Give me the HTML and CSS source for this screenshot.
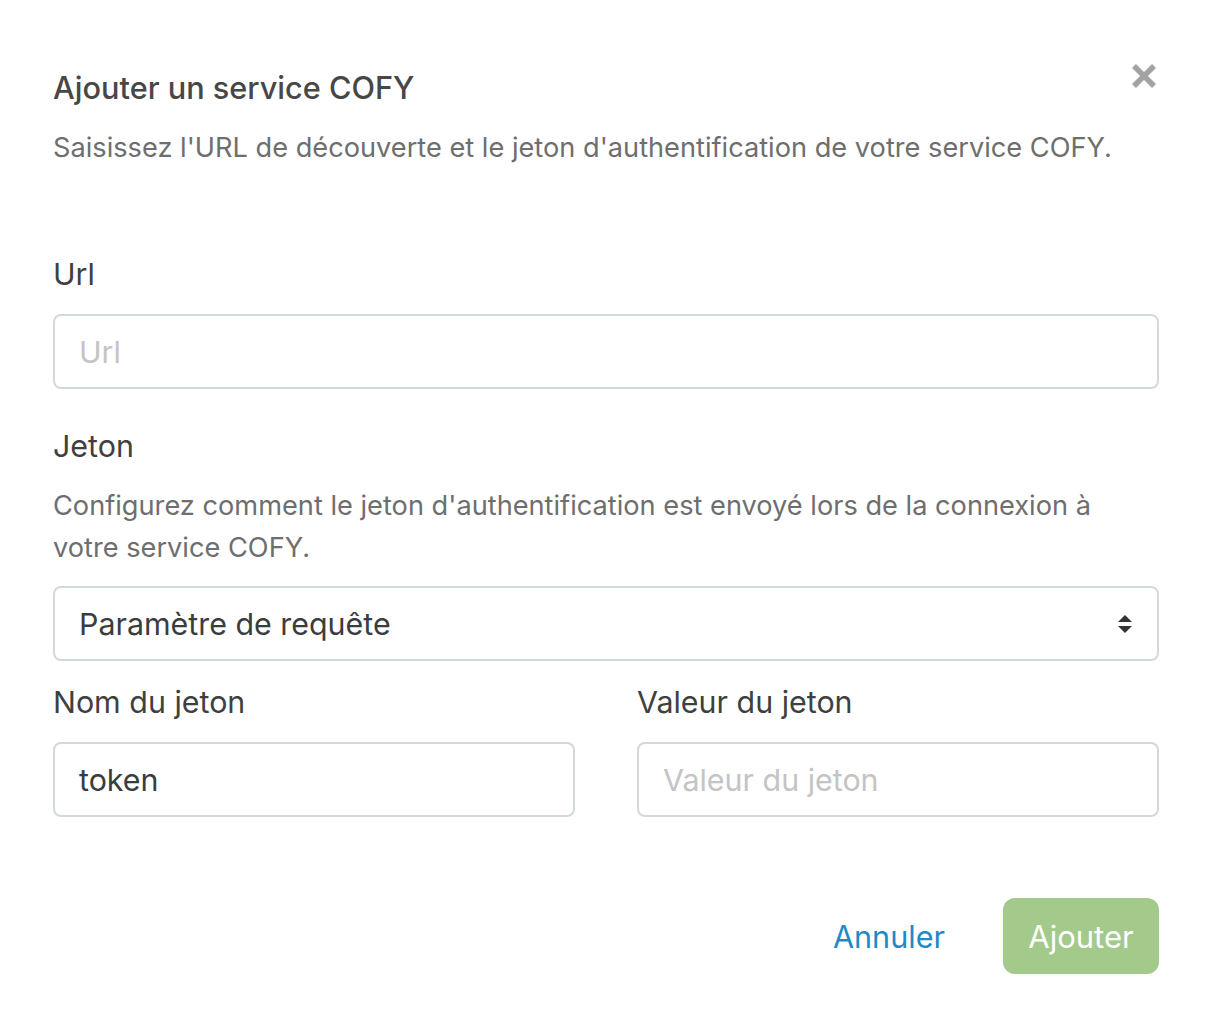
FILE: index.html
```html
<!DOCTYPE html>
<html lang="fr">
<head>
<meta charset="utf-8">
<title>Ajouter un service COFY</title>
<link rel="stylesheet" href="styles.css">
</head>
<body>
<div class="modal">
  <div class="header">
    <div class="head-text">
      <h1 class="title">Ajouter un service COFY</h1>
      <p class="subtitle">Saisissez l'URL de découverte et le jeton d'authentification de votre service COFY.</p>
    </div>
    <button class="close" aria-label="Fermer">
      <svg viewBox="0 0 26 26" width="26" height="26"><path d="M3 3L23 23M23 3L3 23" stroke="#a3a3a3" stroke-width="5.5" stroke-linecap="butt"/></svg>
    </button>
  </div>
  <div class="form">
    <label class="label label-url">Url</label>
    <div class="input placeholder">Url</div>
    <label class="label label-jeton">Jeton</label>
    <p class="desc">Configurez comment le jeton d'authentification est envoyé lors de la connexion à votre service COFY.</p>
    <div class="input select">
      <span>Paramètre de requête</span>
      <svg class="arrows" viewBox="0 0 16 20" width="16" height="20"><path d="M8 1L15 8H1Z" fill="#333"/><path d="M1 12H15L8 19Z" fill="#333"/></svg>
    </div>
    <div class="row">
      <div class="col">
        <label class="label">Nom du jeton</label>
        <div class="input">token</div>
      </div>
      <div class="col">
        <label class="label">Valeur du jeton</label>
        <div class="input placeholder">Valeur du jeton</div>
      </div>
    </div>
  </div>
  <div class="footer">
    <button class="btn-link">Annuler</button>
    <button class="btn-primary">Ajouter</button>
  </div>
</div>
</body>
</html>
```
FILE: styles.css
```css
* { box-sizing: border-box; }
html, body { margin: 0; padding: 0; background: #fff; }
body { font-family: Inter, "Noto Sans", sans-serif; }
.modal { padding: 70px 51px 0 53px; width: 1210px; }
.header { display: flex; justify-content: space-between; align-items: flex-start; }
.title { margin: 0; font-size: 30.7px; line-height: 36px; font-weight: 500; color: #474747; }
.subtitle { margin: 22px 0 0; font-size: 27.2px; line-height: 40px; color: #6e6e6e; }
.close { border: 0; background: none; padding: 0; margin: -7px 2px 0 0; width: 26px; height: 26px; cursor: pointer; }
.close svg { display: block; }
.form { margin-top: 85px; }
.label { display: block; font-size: 30.4px; line-height: 40px; color: #3f3f3f; margin-bottom: 21px; }
.label-url { position: relative; top: 1px; }
.label-jeton { margin-top: 37px; margin-bottom: 19px; }
.desc { margin: 0 0 17px; font-size: 27.2px; line-height: 42px; color: #6e6e6e; }
.input { height: 75px; border: 2px solid #d3d8dd; border-radius: 8px; padding: 0 24px; display: flex; align-items: center; font-family: Inter, sans-serif; font-size: 30.4px; color: #3a3d40; }
.placeholder { color: #c4c4c4; }
.select { justify-content: space-between; padding-right: 24px; }
.arrows { display: block; }
.row { display: grid; grid-template-columns: 1fr 1fr; column-gap: 62px; margin-top: 21px; }
.row .label { margin-bottom: 20px; }
.footer { display: flex; justify-content: flex-end; align-items: center; gap: 58px; margin-top: 81px; }
.btn-link { border: 0; background: none; padding: 0; font-family: Inter, sans-serif; font-size: 30.6px; color: #1e8ac6; }
.btn-primary { border: 0; background: #a3c98b; color: #fff; height: 76px; width: 156px; border-radius: 12px; font-family: Inter, sans-serif; font-size: 31px; }
```
